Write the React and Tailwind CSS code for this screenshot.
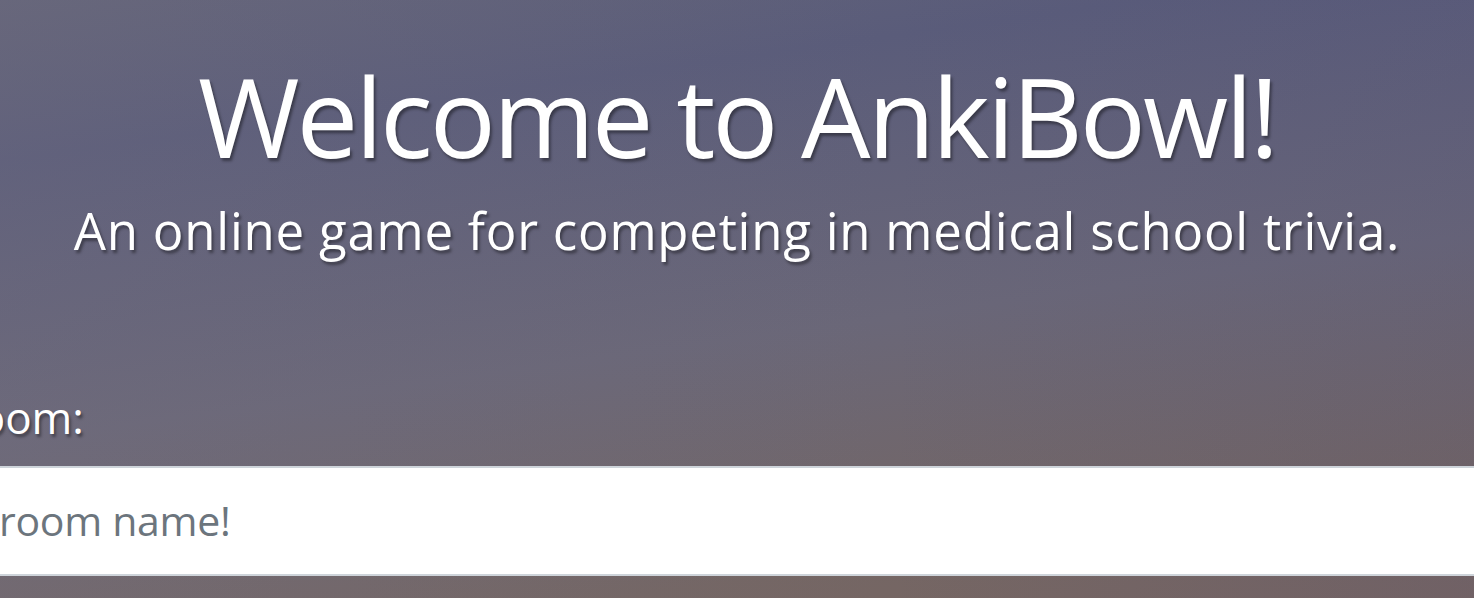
export default function App() {
  return (
    <div className="relative w-full h-[598px] overflow-hidden flex flex-col items-center">
      <div className="absolute inset-0 -z-10 bg-[linear-gradient(172deg,#626379_0%,#5a5c7a_20%,#6a6778_55%,#746664_85%,#786662_100%)]" />
      <div className="absolute inset-0 -z-10 bg-[linear-gradient(90deg,rgba(120,115,130,0.25)_0%,rgba(80,80,120,0)_60%,rgba(70,70,120,0.15)_100%)]" />
      <h1 className="mt-[50px] text-white text-[110px] leading-[130px] font-['Open_Sans',sans-serif] [text-shadow:2px_3px_3px_rgba(0,0,0,0.4)] whitespace-nowrap tracking-[-3px]">
        Welcome to AnkiBowl!
      </h1>
      <p className="mt-[20px] text-white text-[51px] leading-[60px] font-['Open_Sans',sans-serif] [text-shadow:2px_3px_3px_rgba(0,0,0,0.4)] whitespace-nowrap tracking-[0.75px]">
        An online game for competing in medical school trivia.
      </p>
      <div className="mt-[129px] w-[1800px] shrink-0 flex flex-col">
        <label className="text-white text-[44px] leading-[56px] font-['Open_Sans',sans-serif] [text-shadow:2px_3px_3px_rgba(0,0,0,0.4)] whitespace-nowrap">
          Join a room:
        </label>
        <input
          className="mt-[21px] h-[110px] bg-white border-y-2 border-[#ced4da] pl-[18px] pr-[10px] pb-[2px] text-[41px] tracking-[-0.3px] font-['Open_Sans',sans-serif] placeholder:text-[#6c757d] outline-none"
          placeholder="Enter a room name!"
        />
      </div>
    </div>
  );
}
